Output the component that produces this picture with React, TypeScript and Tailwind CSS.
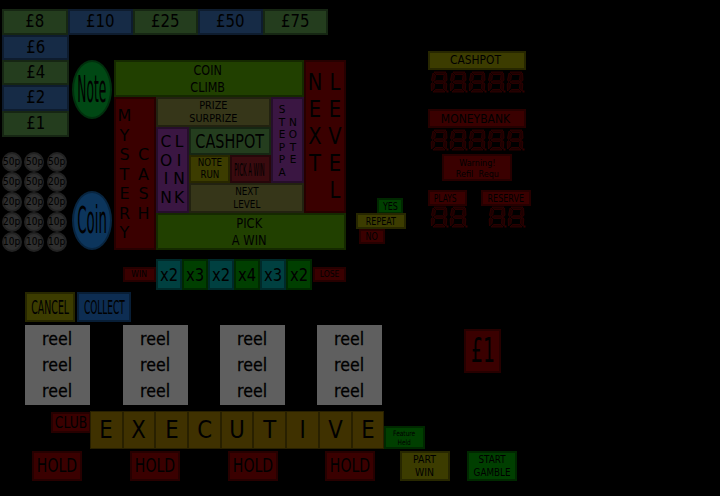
import React from "react";

const GREEN = "bg-[#243d1e] border-[#162613]";
const BLUE = "bg-[#162b46] border-[#0e1c2e]";
const RED = "bg-[#3a0000] border-[#260000]";
const DGREEN = "bg-[#003f00] border-[#002800]";
const OLIVE = "bg-[#3c3c00] border-[#272700]";
const KHAKI = "bg-[#363619] border-[#222210]";
const PURPLE = "bg-[#3a1642] border-[#260e2b]";
const LIME = "bg-[#214000] border-[#152900]";
const TEAL = "bg-[#004040] border-[#002929]";
const AMBER = "bg-[#3f3100] border-[#282000]";

function Box({ c, className = "", children }: { c: string; className?: string; children?: React.ReactNode }) {
  return (
    <div className={`flex items-center justify-center text-center border-2 overflow-hidden whitespace-nowrap ${c} ${className}`}>
      {children}
    </div>
  );
}

function Squeeze({ className, children }: { className: string; children: React.ReactNode }) {
  return <span className={`inline-block shrink-0 whitespace-nowrap ${className}`}>{children}</span>;
}

function Digit() {
  const p = { fill: "#1c0000", stroke: "#320000", strokeWidth: 0.8 };
  return (
    <svg width="19" height="22" viewBox="0 0 19 22" className="block">
      <polygon points="4,1 16,1 14,3.5 6,3.5" {...p} />
      <polygon points="3,2 5.5,4.5 4.8,9 2.5,10.5 1.5,9" {...p} />
      <polygon points="16.5,2 17,9 16,10.5 13.5,9 14,4.5" {...p} />
      <polygon points="4,11 6,9.8 13,9.8 15,11 13,12.4 6,12.4" {...p} />
      <polygon points="2.3,11.6 4.5,13 4,17.5 1.5,20 1.2,13" {...p} />
      <polygon points="16,11.6 16.8,13 16.2,20 13.5,17.5 13.8,13" {...p} />
      <polygon points="3,21 5.5,18.5 13,18.5 15,21" {...p} />
      <rect x="16.5" y="19.5" width="2" height="2" fill="#320000" />
    </svg>
  );
}

function Disc({ v }: { v: string }) {
  return (
    <div className="flex h-[20px] w-[20px] items-center justify-center rounded-full border-2 border-[#222222] bg-[#2e2e2e] text-[10px] leading-none text-black">
      <Squeeze className="[transform:scaleX(.9)]">{v}</Squeeze>
    </div>
  );
}

function Reel({ className }: { className: string }) {
  const word = "[transform:scaleX(.88)] [-webkit-text-stroke:0.3px_black]";
  return (
    <div className={`absolute top-[325px] flex h-[80px] w-[65px] flex-col items-center justify-center bg-[#5f5f5f] text-[18px] leading-[26px] text-black ${className}`}>
      <Squeeze className={word}>reel</Squeeze>
      <Squeeze className={word}>reel</Squeeze>
      <Squeeze className={word}>reel</Squeeze>
    </div>
  );
}

const Hold = ({ className }: { className: string }) => (
  <Box c={RED} className={`absolute top-[451px] h-[30px] w-[50px] text-[19.5px] ${className}`}>
    <Squeeze className="[transform:scaleX(.72)]">HOLD</Squeeze>
  </Box>
);

const discOrder = ["50p", "50p", "50p", "50p", "50p", "20p", "20p", "20p", "20p", "20p", "10p", "10p", "10p", "10p", "10p"];
const mults: [string, string][] = [
  ["x2", TEAL], ["x3", DGREEN], ["x2", TEAL], ["x4", DGREEN], ["x3", TEAL], ["x2", DGREEN],
];

export default function App() {
  return (
    <div className="relative h-[496px] w-[720px] overflow-hidden bg-black text-black [font-family:'DejaVu_Sans',sans-serif]">
      {/* prize ladder */}
      <div className="absolute left-[2px] top-[9px] flex text-[17px]">
        <Box c={GREEN} className="h-[26px] w-[66px]"><Squeeze className="[transform:scaleX(.88)]">£8</Squeeze></Box>
        <Box c={BLUE} className="h-[26px] w-[65px]"><Squeeze className="[transform:scaleX(.88)]">£10</Squeeze></Box>
        <Box c={GREEN} className="h-[26px] w-[65px]"><Squeeze className="[transform:scaleX(.88)]">£25</Squeeze></Box>
        <Box c={BLUE} className="h-[26px] w-[65px]"><Squeeze className="[transform:scaleX(.88)]">£50</Squeeze></Box>
        <Box c={GREEN} className="h-[26px] w-[65px]"><Squeeze className="[transform:scaleX(.88)]">£75</Squeeze></Box>
      </div>
      <div className="absolute left-[2px] top-[35px] flex w-[67px] flex-col text-[17px]">
        <Box c={BLUE} className="h-[25px]"><Squeeze className="[transform:scaleX(.88)]">£6</Squeeze></Box>
        <Box c={GREEN} className="h-[25px]"><Squeeze className="[transform:scaleX(.88)]">£4</Squeeze></Box>
        <Box c={BLUE} className="h-[26px]"><Squeeze className="[transform:scaleX(.88)]">£2</Squeeze></Box>
        <Box c={GREEN} className="h-[26px]"><Squeeze className="[transform:scaleX(.88)]">£1</Squeeze></Box>
      </div>

      {/* note / coin */}
      <div className="absolute left-[72px] top-[60px] flex h-[59px] w-[40px] items-center justify-center rounded-[50%] border-2 border-[#00300d] bg-[#004814] text-[37px]">
        <Squeeze className="[transform:scaleX(.33)]">Note</Squeeze>
      </div>
      <div className="absolute left-[72px] top-[191px] flex h-[59px] w-[40px] items-center justify-center rounded-[50%] border-2 border-[#082540] bg-[#0c355c] text-[37px]">
        <Squeeze className="[transform:scaleX(.36)]">Coin</Squeeze>
      </div>

      {/* coins */}
      <div className="absolute left-[2px] top-[152px] grid grid-cols-3 gap-x-[2.3px]">
        {discOrder.map((d, i) => (
          <Disc key={i} v={d} />
        ))}
      </div>

      {/* feature board */}
      <div className="absolute left-[114px] top-[60px] grid h-[190px] w-[232px] grid-cols-[42px_33px_41px_41px_33px_42px] grid-rows-[37px_30px_28px_28px_30px_37px]">
        <Box c={LIME} className="col-start-1 col-end-6 row-start-1 row-end-2 pr-[2px] text-[14px] leading-[16.5px]">
          <Squeeze className="[transform:scaleX(.8)]">COIN<br />CLIMB</Squeeze>
        </Box>
        <Box c={RED} className="col-start-6 col-end-7 row-start-1 row-end-6 items-start pt-[7px] text-[23px] leading-[27px]">
          <div className="w-[20px] shrink-0 [transform:scaleX(.85)]">N<br />E<br />X<br />T</div>
          <div className="w-[20px] shrink-0 [transform:scaleX(.85)]">L<br />E<br />V<br />E<br />L</div>
        </Box>
        <Box c={RED} className="col-start-1 col-end-2 row-start-2 row-end-7 items-start pr-[2px] pt-[7px] text-[16px] leading-[19.5px]">
          <div className="w-[19px] shrink-0">M<br />Y<br />S<br />T<br />E<br />R<br />Y</div>
          <div className="w-[19px] shrink-0 pt-[39px]">C<br />A<br />S<br />H</div>
        </Box>
        <Box c={KHAKI} className="col-start-2 col-end-5 row-start-2 row-end-3 text-[11px] leading-[13px]">
          <Squeeze className="[transform:scaleX(.88)]">PRIZE<br />SURPRIZE</Squeeze>
        </Box>
        <Box c={PURPLE} className="col-start-5 col-end-6 row-start-2 row-end-5 items-start pt-[4px] text-[10.5px] leading-[12.5px]">
          <div className="w-[11px] shrink-0">S<br />T<br />E<br />P<br />P<br />A</div>
          <div className="w-[11px] shrink-0 pt-[12.5px]">N<br />O<br />T<br />E</div>
        </Box>
        <Box c={PURPLE} className="col-start-2 col-end-3 row-start-3 row-end-6 text-[15.5px] leading-[18.5px]">
          <div className="w-[13px] shrink-0">C<br />O<br />I<br />N</div>
          <div className="w-[13px] shrink-0">L<br />I<br />N<br />K</div>
        </Box>
        <Box c={GREEN} className="col-start-3 col-end-5 row-start-3 row-end-4 text-[20px]">
          <Squeeze className="[transform:scaleX(.72)]">CASHPOT</Squeeze>
        </Box>
        <Box c={OLIVE} className="col-start-3 col-end-4 row-start-4 row-end-5 text-[10px] leading-[12px]">
          <Squeeze className="[transform:scaleX(.87)]">NOTE<br />RUN</Squeeze>
        </Box>
        <Box c="bg-[#3a0b0f] border-[#26070a]" className="col-start-4 col-end-5 row-start-4 row-end-5 pr-[2px] text-[18px]">
          <Squeeze className="[transform:scaleX(.3)]">PICK A WIN</Squeeze>
        </Box>
        <Box c={KHAKI} className="col-start-3 col-end-6 row-start-5 row-end-6 text-[11px] leading-[13px]">
          <Squeeze className="[transform:scaleX(.8)]">NEXT<br />LEVEL</Squeeze>
        </Box>
        <Box c={LIME} className="col-start-2 col-end-7 row-start-6 row-end-7 pr-[4px] text-[14px] leading-[16.5px]">
          <Squeeze className="[transform:scaleX(.82)]">PICK<br />A WIN</Squeeze>
        </Box>
      </div>

      {/* meters */}
      <Box c={OLIVE} className="absolute left-[428px] top-[51px] h-[19px] w-[98px] pr-[4px] text-[11.5px]">
        <Squeeze className="[transform:scaleX(.93)]">CASHPOT</Squeeze>
      </Box>
      <div className="absolute left-[430px] top-[71px] flex"><Digit /><Digit /><Digit /><Digit /><Digit /></div>
      <Box c={RED} className="absolute left-[428px] top-[109px] h-[19px] w-[98px] pr-[4px] text-[12px]">
        <Squeeze className="[transform:scaleX(.9)]">MONEYBANK</Squeeze>
      </Box>
      <div className="absolute left-[430px] top-[129px] flex"><Digit /><Digit /><Digit /><Digit /><Digit /></div>
      <Box c={RED} className="absolute left-[442px] top-[154px] h-[27px] w-[70px] text-[9.5px] leading-[11px]">
        <Squeeze className="[transform:scaleX(.85)]">Warning!<br />Refil{"\u00a0\u00a0"}Requ</Squeeze>
      </Box>
      <Box c={RED} className="absolute left-[428px] top-[190px] h-[16px] w-[39px] pr-[4px] text-[10px]">
        <Squeeze className="[transform:scaleX(.75)]">PLAYS</Squeeze>
      </Box>
      <div className="absolute left-[430px] top-[206px] flex"><Digit /><Digit /></div>
      <Box c={RED} className="absolute left-[481px] top-[190px] h-[16px] w-[50px] text-[10px]">
        <Squeeze className="[transform:scaleX(.8)]">RESERVE</Squeeze>
      </Box>
      <div className="absolute left-[488px] top-[206px] flex"><Digit /><Digit /></div>

      {/* gamble */}
      <Box c={DGREEN} className="absolute left-[377px] top-[198px] h-[16px] w-[26px] text-[10px]">
        <Squeeze className="[transform:scaleX(.8)]">YES</Squeeze>
      </Box>
      <Box c={OLIVE} className="absolute left-[356px] top-[213px] h-[16px] w-[50px] text-[10px]">
        <Squeeze className="[transform:scaleX(.8)]">REPEAT</Squeeze>
      </Box>
      <Box c={RED} className="absolute left-[359px] top-[229px] h-[15px] w-[26px] text-[10px]">
        <Squeeze className="[transform:scaleX(.8)]">NO</Squeeze>
      </Box>

      {/* multipliers */}
      <div className="absolute left-[123px] top-[259px] flex items-center">
        <Box c={RED} className="h-[15px] w-[33px] text-[9px]">
          <Squeeze className="[transform:scaleX(.85)]">WIN</Squeeze>
        </Box>
        <div className="flex text-[18px]">
          {mults.map(([t, c], i) => (
            <Box key={i} c={c} className="h-[31px] w-[26px]">
              <Squeeze className="[transform:scaleX(.82)]">{t}</Squeeze>
            </Box>
          ))}
        </div>
        <Box c={RED} className="ml-[1px] h-[15px] w-[33px] text-[9px]">
          <Squeeze className="[transform:scaleX(.85)]">LOSE</Squeeze>
        </Box>
      </div>

      {/* cancel / collect */}
      <div className="absolute left-[25px] top-[292px] flex gap-[2px] text-[20px]">
        <Box c={OLIVE} className="h-[30px] w-[50px]">
          <Squeeze className="[transform:scaleX(.47)]">CANCEL</Squeeze>
        </Box>
        <Box c="bg-[#0d2d52] border-[#081e36]" className="h-[30px] w-[54px]">
          <Squeeze className="[transform:scaleX(.45)]">COLLECT</Squeeze>
        </Box>
      </div>

      {/* reels */}
      <Reel className="left-[25px]" />
      <Reel className="left-[123px]" />
      <Reel className="left-[220px]" />
      <Reel className="left-[317px]" />

      <Box c={RED} className="absolute left-[464px] top-[329px] h-[44px] w-[37px] text-[33px]">
        <Squeeze className="[transform:scaleX(.57)]">£1</Squeeze>
      </Box>

      {/* club / executive */}
      <Box c={RED} className="absolute left-[51px] top-[412px] h-[21px] w-[40px] text-[16px]">
        <Squeeze className="[transform:scaleX(.77)]">CLUB</Squeeze>
      </Box>
      <div className="absolute left-[90px] top-[411px] flex text-[25px]">
        {"EXECUTIVE".split("").map((l, i) => (
          <Box key={i} c={AMBER} className="h-[38px] w-[32.7px] border-[1px]">
            <Squeeze className="[transform:scaleX(.85)]">{l}</Squeeze>
          </Box>
        ))}
      </div>
      <Box c={DGREEN} className="absolute left-[384px] top-[426px] h-[23px] w-[41px] text-[7.5px] leading-[9px]">
        <Squeeze className="[transform:scaleX(.78)]">Feature<br />Held</Squeeze>
      </Box>

      {/* holds */}
      <Hold className="left-[32px]" />
      <Hold className="left-[130px]" />
      <Hold className="left-[228px]" />
      <Hold className="left-[325px]" />
      <Box c={OLIVE} className="absolute left-[400px] top-[451px] h-[30px] w-[50px] text-[11px] leading-[13px]">
        <Squeeze className="[transform:scaleX(.85)]">PART<br />WIN</Squeeze>
      </Box>
      <Box c={DGREEN} className="absolute left-[467px] top-[451px] h-[30px] w-[50px] text-[11px] leading-[13px]">
        <Squeeze className="[transform:scaleX(.8)]">START<br />GAMBLE</Squeeze>
      </Box>
    </div>
  );
}
